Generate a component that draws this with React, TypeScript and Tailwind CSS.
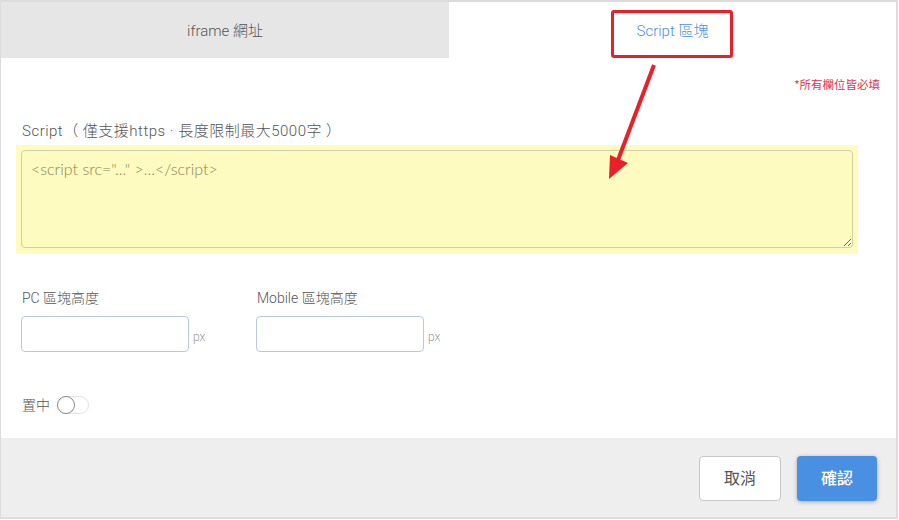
import React from "react";

export default function App() {
  const font = { fontFamily: 'Roboto, "Noto Sans CJK TC", sans-serif' } as React.CSSProperties;
  const lato = { fontFamily: 'Lato, "Noto Sans CJK TC", sans-serif' } as React.CSSProperties;
  return (
    <div className="w-[899px] h-[520px] bg-white relative font-light" style={font}>
      <div className="w-[898px] h-[519px] border-l border-t-2 border-r-2 border-b-2 border-[#dcdcdc] flex flex-col bg-white">
        {/* Tabs */}
        <div className="flex h-[56px] shrink-0">
          <div className="w-[448px] bg-[#e6e6e6] flex items-center justify-center text-[15px] text-[#555] pt-[3px]">
            iframe 網址
          </div>
          <div className="flex-1 bg-white flex items-center justify-center text-[15px] text-[#4a90e2] pt-[3px]">
            Script 區塊
          </div>
        </div>
        {/* Body */}
        <div className="flex-1 flex flex-col px-[15px] relative">
          <div className="flex justify-end pr-[1px] pt-[19px] text-[11.5px] leading-[14px] text-[#e0334a] font-normal" style={{ fontFamily: '"Noto Sans CJK TC", serif' }}>
            *所有欄位皆必填
          </div>
          <div className="mt-[31px] pl-[6px] text-[15px] leading-[19px] text-[#555] tracking-[0.5px]">
            Script（ 僅支援https · 長度限制最大5000字 ）
          </div>
          <div className="mt-[4px] w-[842px] h-[109px] bg-[#fdfbbf] p-[5px] pb-[6px]">
            <textarea
              className="w-full h-full bg-[#fdfbbf] border border-[#cfd0a4] rounded-[4px] px-[9px] py-[8px] text-[16px] leading-[20px] text-[#666] placeholder:text-[#88865a] outline-none"
              style={lato}
              placeholder={'<script src="..." >...</script>'}
            />
          </div>
          <div className="flex mt-[36px] pl-[5px]">
            <div className="w-[235px]">
              <div className="text-[14px] leading-[17px] text-[#555] pl-[1px]">PC 區塊高度</div>
              <div className="flex items-end mt-[9px]">
                <div className="w-[168px] h-[36px] border border-[#b9c9d9] rounded-[4px] bg-white" />
                <span className="ml-[4px] text-[12px] leading-[14px] text-[#999] mb-[8px]">px</span>
              </div>
            </div>
            <div>
              <div className="text-[14px] leading-[17px] text-[#555] pl-[1px]">Mobile 區塊高度</div>
              <div className="flex items-end mt-[9px]">
                <div className="w-[168px] h-[36px] border border-[#b9c9d9] rounded-[4px] bg-white" />
                <span className="ml-[4px] text-[12px] leading-[14px] text-[#999] mb-[8px]">px</span>
              </div>
            </div>
          </div>
          <div className="flex items-center mt-[44px] pl-[6px]">
            <span className="text-[14px] leading-[16px] text-[#555]">置中</span>
            <div className="ml-[7px] w-[32px] h-[18px] rounded-full border border-[#e2e2e2] bg-white relative">
              <div className="absolute left-[-1px] top-[-1px] w-[18px] h-[18px] rounded-full border border-[#888] bg-white" />
            </div>
          </div>
        </div>
        {/* Footer */}
        <div className="h-[79px] shrink-0 bg-[#eeeeee] flex items-center justify-end gap-[16px] pr-[19px] pt-[2px]">
          <button className="w-[82px] h-[45px] bg-white border border-[#c8c8c8] rounded-[4px] text-[16px] font-normal text-[#555]" style={font}>取消</button>
          <button className="w-[80px] h-[45px] bg-[#4a90e2] rounded-[4px] text-[16px] font-medium text-white shadow-[0_1px_4px_rgba(0,0,0,0.3)]" style={font}>確認</button>
        </div>
      </div>
      {/* Annotation */}
      <div className="absolute left-[611px] top-[10px] w-[122px] h-[48px] border-[3px] border-[#e8202a] rounded-[3px]" />
      <svg className="absolute left-0 top-0 pointer-events-none" width="899" height="520">
        <line x1="654" y1="65" x2="618" y2="160" stroke="#e8202a" strokeWidth="4" />
        <polygon points="609,179 610,155 628,163" fill="#e8202a" />
      </svg>
    </div>
  );
}
